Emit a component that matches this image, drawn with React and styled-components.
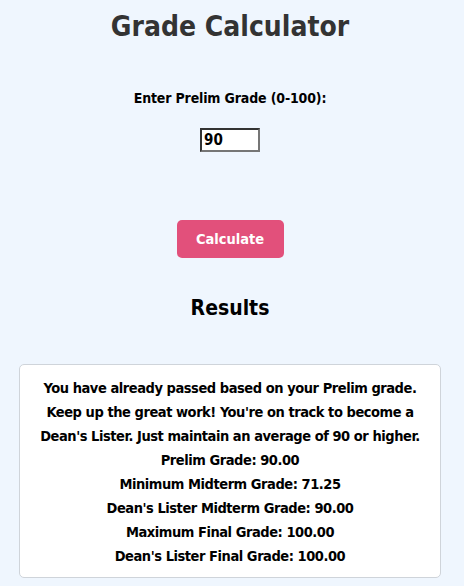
import React, { useState } from 'react';
import styled, { createGlobalStyle } from 'styled-components';

const GlobalStyle = createGlobalStyle`
  html, body {
    margin: 0;
    padding: 0;
    background: #eff6fe;
  }
  body {
    font-family: "DejaVu Sans Condensed", "Liberation Sans", Arial, sans-serif;
    font-weight: bold;
    color: #000;
  }
`;

const Page = styled.div`
  display: flex;
  flex-direction: column;
  align-items: center;
  padding: 11px 23px 8px 19px;
`;

const Title = styled.h1`
  margin: 0;
  font-size: 28px;
  line-height: 32px;
  color: #333;
`;

const Label = styled.label`
  margin-top: 45px;
  font-size: 14px;
  letter-spacing: -0.15px;
  line-height: 20px;
`;

const Input = styled.input`
  margin-top: 20px;
  width: 52px;
  height: 20px;
  padding: 0 2px;
  border: 2px solid #767676;
  border-top-color: #333;
  border-left-color: #333;
  font: inherit;
  font-size: 15px;
  background: #fff;
  box-sizing: content-box;
  outline: none;
`;

const Button = styled.button`
  margin-top: 68px;
  width: 107px;
  height: 38px;
  border: none;
  border-radius: 5px;
  background: #e2507b;
  color: #fff;
  font: inherit;
  font-size: 14.5px;
  cursor: pointer;
`;

const Subtitle = styled.h2`
  margin: 38px 0 0;
  font-size: 21px;
  line-height: 24px;
`;

const Card = styled.div`
  margin-top: 44px;
  align-self: stretch;
  background: #fff;
  border: 1px solid #cfd4da;
  border-radius: 5px;
  padding: 11px 4px 9px;
  text-align: center;
`;

const Line = styled.p`
  margin: 0;
  font-size: 14.5px;
  letter-spacing: -0.45px;
  line-height: 24px;
  white-space: nowrap;
`;

export default function App() {
  const [grade, setGrade] = useState('90');
  return (
    <>
      <GlobalStyle />
      <Page>
        <Title>Grade Calculator</Title>
        <Label htmlFor="prelim">Enter Prelim Grade (0-100):</Label>
        <Input id="prelim" value={grade} onChange={e => setGrade(e.target.value)} />
        <Button>Calculate</Button>
        <Subtitle>Results</Subtitle>
        <Card>
          <Line>
            You have already passed based on your Prelim grade.
            <br />
            Keep up the great work! You're on track to become a
            <br />
            Dean's Lister. Just maintain an average of 90 or higher.
          </Line>
          <Line>Prelim Grade: 90.00</Line>
          <Line>Minimum Midterm Grade: 71.25</Line>
          <Line>Dean's Lister Midterm Grade: 90.00</Line>
          <Line>Maximum Final Grade: 100.00</Line>
          <Line>Dean's Lister Final Grade: 100.00</Line>
        </Card>
      </Page>
    </>
  );
}
